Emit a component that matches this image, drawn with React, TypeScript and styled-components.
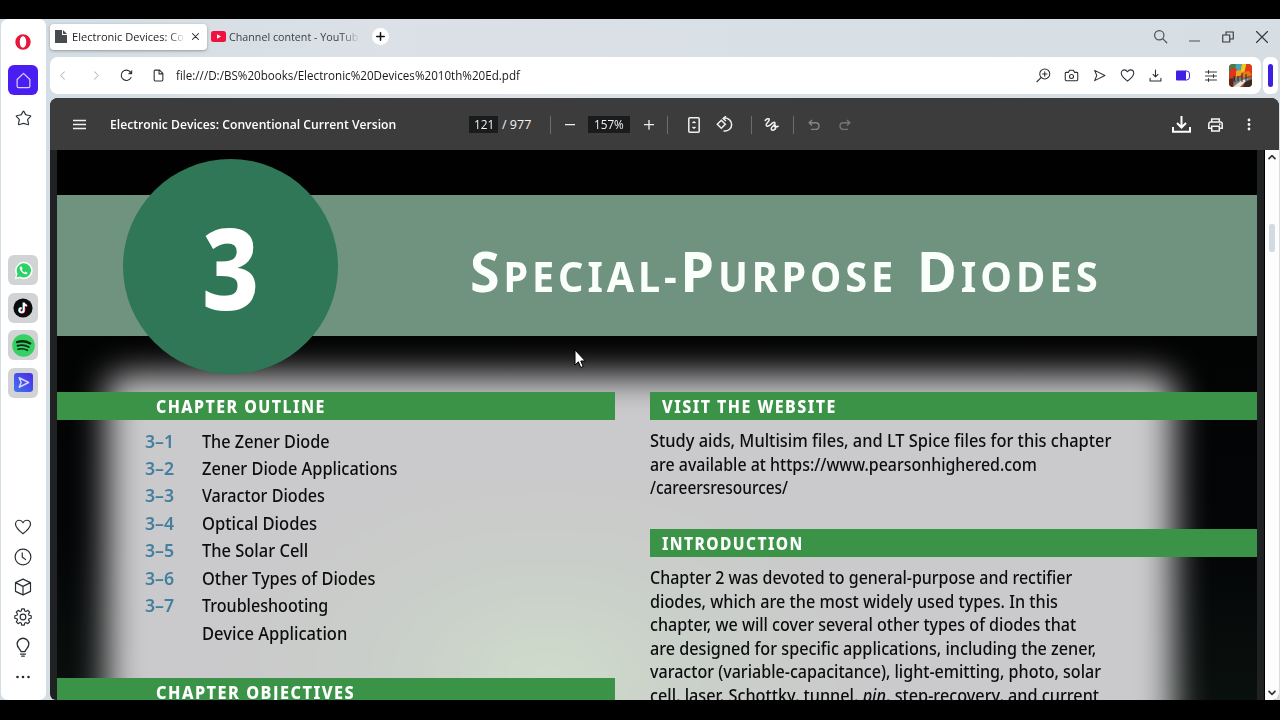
import React, { useLayoutEffect, useRef, useState } from "react";
import styled, { createGlobalStyle, css } from "styled-components";

const Global = createGlobalStyle`
  * { box-sizing: border-box; }
  body { margin: 0; background: #000; overflow: hidden; }
`;

const ui = `"Open Sans", "Noto Sans", sans-serif`;
const book = `"Noto Sans", "Open Sans", sans-serif`;

/* ---------- text set to a fixed measure ---------- */

const Measure = styled.span<{ $w: number }>`
  display: inline-block;
  flex: none;
  width: ${(p) => p.$w}px;
  white-space: nowrap;
`;

const Stretch = styled.span`
  display: inline-block;
  transform-origin: 0 50%;
`;

function Fit({ w, children }: { w: number; children: React.ReactNode }) {
  const ref = useRef<HTMLSpanElement>(null);
  const [scale, setScale] = useState(1);
  useLayoutEffect(() => {
    if (ref.current) setScale(w / ref.current.offsetWidth);
  }, [w]);
  return (
    <Measure $w={w}>
      <Stretch ref={ref} style={{ transform: `scaleX(${scale})` }}>
        {children}
      </Stretch>
    </Measure>
  );
}

/* ---------- window ---------- */

const Screen = styled.div`
  width: 1280px;
  height: 720px;
  padding: 19px 0 20px;
  background: #000;
  overflow: hidden;
  font-family: ${ui};
`;

const Window = styled.div`
  display: flex;
  height: 681px;
  padding-left: 1px;
  background: linear-gradient(90deg, #d3dde3 0%, #dbe1e6 30%, #d6dee3 100%);
`;

const Sidebar = styled.aside`
  display: flex;
  flex-direction: column;
  align-items: center;
  gap: 8px;
  flex: none;
  width: 45px;
  padding: 8px 1px 8px 0;
  background: #fff;
  border-radius: 7px;
`;

const SideSlot = styled.div<{ $tone?: string }>`
  display: flex;
  align-items: center;
  justify-content: center;
  flex: none;
  width: 30px;
  height: 30px;
  border-radius: 6px;
  background: ${(p) => p.$tone ?? "transparent"};
`;

const AppGroup = styled.div`
  display: flex;
  flex-direction: column;
  gap: 7.5px;
  margin-top: 114px;
`;

const ToolGroup = styled.div`
  margin-top: auto;
`;

const Main = styled.main`
  display: flex;
  flex-direction: column;
  flex: none;
  width: 1230px;
  margin-left: 4px;
`;

const TabStrip = styled.div`
  display: flex;
  align-items: center;
  height: 38px;
  padding-bottom: 3px;
`;

const Tab = styled.div<{ $active?: boolean }>`
  display: flex;
  align-items: center;
  flex: none;
  height: 26px;
  font-size: 11.5px;
  color: ${(p) => (p.$active ? "#1b1f24" : "#39414a")};
  ${(p) =>
    p.$active
      ? css`
          width: 157px;
          padding-left: 5px;
          background: #fff;
          border-radius: 4px;
          box-shadow: 0 1px 3px rgba(40, 50, 60, 0.4);
        `
      : css`
          width: 152px;
          padding-left: 4px;
        `}
`;

const TabLabel = styled.div<{ $w: number; $ml: number }>`
  width: ${(p) => p.$w}px;
  margin-left: ${(p) => p.$ml}px;
  overflow: hidden;
  white-space: nowrap;
  mask-image: linear-gradient(90deg, #000 86%, transparent 101%);
`;

const NewTab = styled.div`
  display: flex;
  align-items: center;
  justify-content: center;
  width: 17px;
  height: 17px;
  margin-left: 13px;
  border-radius: 50%;
  background: #fff;
`;

const Cell = styled.div<{ $w: number; $ml?: number }>`
  display: flex;
  align-items: center;
  justify-content: center;
  flex: none;
  width: ${(p) => p.$w}px;
  margin-left: ${(p) => p.$ml ?? 0}px;
`;

const Push = styled.div`
  margin-left: auto;
  display: flex;
  align-items: center;
`;

const AddressRow = styled.div`
  display: flex;
  gap: 2px;
  height: 37px;
`;

const AddressBar = styled.div`
  display: flex;
  align-items: center;
  width: 1211px;
  border-radius: 8px;
  background: #fff;
  font-size: 12.5px;
  color: #17191c;
`;

const SideToggle = styled.div`
  display: flex;
  align-items: center;
  justify-content: center;
  width: 15px;
  border-radius: 6px;
  background: #fff;
`;

const ToggleBar = styled.div`
  width: 5px;
  height: 23px;
  border-radius: 3px;
  background: #3d1fe0;
`;

/* ---------- document viewer ---------- */

const Viewer = styled.section`
  display: flex;
  flex-direction: column;
  width: 1229px;
  height: 602px;
  margin-top: 4px;
  border-radius: 8px 8px 6px 6px;
  background: #202122;
  overflow: hidden;
`;

const PdfBar = styled.div`
  display: flex;
  align-items: center;
  flex: none;
  height: 52px;
  padding-top: 1px;
  background: #3c3c3c;
  color: #f3f3f3;
  font-size: 12.5px;
`;

const DocTitle = styled.div`
  width: 359px;
  font-weight: 600;
  color: #fff;
`;

const NumberBox = styled.div<{ $w: number }>`
  display: flex;
  align-items: center;
  justify-content: center;
  flex: none;
  width: ${(p) => p.$w}px;
  height: 17px;
  background: #191b1c;
  font-weight: 500;
`;

const PageTotal = styled.div`
  width: 52px;
  padding-left: 4px;
  font-weight: 500;
`;

const Rule = styled.div<{ $ml?: number }>`
  width: 1px;
  height: 18px;
  margin-left: ${(p) => p.$ml ?? 0}px;
  background: #6d6d6d;
`;

const Body = styled.div`
  display: flex;
  flex: 1;
  padding-left: 7px;
`;

const Page = styled.article`
  position: relative;
  isolation: isolate;
  width: 1200px;
  height: 550px;
  overflow: hidden;
  background: linear-gradient(180deg, #010101 0%, #040506 70%, #0a100e 100%);
  font-family: ${book};
  color: #0d0d0f;

  &::before {
    content: "";
    position: absolute;
    z-index: -1;
    left: 50px;
    top: 225px;
    width: 1067px;
    height: 420px;
    border-radius: 16px;
    filter: blur(17px);
    background:
      radial-gradient(ellipse 330px 210px at 440px 300px, #cfdccb 0%, rgba(202, 214, 200, 0.5) 45%, rgba(201, 201, 202, 0) 100%),
      #cac9cb;
  }
`;

const Banner = styled.header`
  display: flex;
  align-items: center;
  height: 141px;
  margin-top: 45px;
  background: #6f937e;
`;

const ChapterDisc = styled.div`
  display: flex;
  align-items: center;
  justify-content: center;
  flex: none;
  width: 215px;
  height: 215px;
  margin: 2px 0 0 66px;
  border-radius: 50%;
  background: #307757;
  color: #fff;
  font-size: 113px;
  font-weight: 800;
  line-height: 1;
`;

const ChapterTitle = styled.h1`
  display: flex;
  gap: 20px;
  margin: 16px 0 0 132px;
  color: #fbfffb;
  font-size: 40.5px;
  font-weight: 700;
  line-height: 60px;
  letter-spacing: 4px;
`;

const Initial = styled.span`
  font-size: 55px;
  line-height: 60px;
`;

const Columns = styled.div`
  display: flex;
  gap: 35px;
  margin-top: 56px;
`;

const Column = styled.div<{ $w: number }>`
  flex: none;
  width: ${(p) => p.$w}px;
`;

const Heading = styled.h2<{ $pad: number; $mt?: number }>`
  height: 27.5px;
  margin: ${(p) => p.$mt ?? 0}px 0 0;
  padding-left: ${(p) => p.$pad}px;
  background: #3a9347;
  color: #fff;
  font-size: 17.5px;
  font-weight: 800;
  line-height: 28px;
  letter-spacing: 1.6px;
`;

const Outline = styled.ol`
  margin: 8px 0 0;
  padding: 0 0 0 87.5px;
  list-style: none;
`;

const OutlineRow = styled.li`
  display: flex;
  height: 27.45px;
  font-size: 18px;
  font-weight: 500;
  line-height: 27.45px;
`;

const Number = styled.span`
  width: 57px;
  color: #43809f;
  font-weight: 600;
`;

const Copy = styled.p`
  display: flex;
  flex-direction: column;
  margin: 9.5px 0 0;
  font-size: 18px;
  font-weight: 500;
  line-height: 23.5px;
`;

const ScrollTrack = styled.div`
  display: flex;
  flex-direction: column;
  align-items: center;
  width: 15px;
  margin-left: 7px;
  padding: 3px 0;
  border-left: 1px solid #000;
  background: #fdfdfd;
`;

const Thumb = styled.div`
  width: 6px;
  height: 28px;
  margin: 63px 0 auto;
  border-radius: 2px;
  background: #d3dbe2;
`;

const Pointer = styled.svg`
  position: absolute;
  left: 517px;
  top: 199px;
`;

/* ---------- icons ---------- */

type IconProps = {
  s: number;
  c?: string;
  sw?: number;
  children: React.ReactNode;
};

function Icon({ s, c = "#2b2f33", sw = 1.6, children }: IconProps) {
  return (
    <svg width={s} height={s} viewBox="0 0 24 24" fill="none" stroke={c} strokeWidth={sw} strokeLinecap="round" strokeLinejoin="round">
      {children}
    </svg>
  );
}

const heart = <path d="M12 21C7 17 2 13 2 8.3C2 5 4.400 3 7 3c2.200 0 4 1.200 5 3.200C13 4.200 14.800 3 17 3c2.600 0 5 2 5 5.300C22 13 17 17 12 21z" />;

const apps = [
  <svg key="w" width="19" height="19" viewBox="0 0 24 24">
    <path d="M1 23l1.700-6A11 11 0 1 1 7 21.500z" fill="#fff" />
    <path d="M3.200 20.800l1.300-4.700A9 9 0 1 1 8 19.700z" fill="#2bd366" />
    <path d="M8.400 6.800c-.8.500-1.300 1.500-1.100 2.700.6 3.300 3.700 6.500 7 7.200 1.300.2 2.500-.6 2.800-2l-2.500-1.400-1.300 1.200c-1.500-.6-2.800-1.900-3.500-3.400l1.100-1.300-1.200-2.900z" fill="#fff" />
  </svg>,
  <svg key="t" width="20" height="20" viewBox="0 0 24 24">
    <circle cx="12" cy="12" r="11.500" fill="#0b0b0d" />
    <path d="M12.400 5.500v9a2.600 2.600 0 1 1-2.600-2.600" fill="none" stroke="#25e5e0" strokeWidth="2.200" />
    <path d="M13.600 6v9a2.600 2.600 0 1 1-2.600-2.600M13.600 6c.3 2 1.700 3.300 3.700 3.500" fill="none" stroke="#f5315d" strokeWidth="2.200" />
    <path d="M13 5.600v9a2.600 2.600 0 1 1-2.600-2.600M13 5.600c.3 2 1.700 3.300 3.700 3.500" fill="none" stroke="#fff" strokeWidth="2.100" />
  </svg>,
  <svg key="s" width="23" height="23" viewBox="0 0 24 24">
    <circle cx="12" cy="12" r="11.800" fill="#35d162" />
    <g fill="none" stroke="#0c2a14" strokeLinecap="round">
      <path d="M5.200 8.400c4.700-1.400 9.800-.9 13.800 1.400" strokeWidth="2.400" />
      <path d="M5.800 12.300c4-1.200 8.300-.7 11.700 1.300" strokeWidth="2" />
      <path d="M6.300 15.900c3.300-.9 6.900-.5 9.800 1.100" strokeWidth="1.700" />
    </g>
  </svg>,
  <svg key="f" width="19" height="19" viewBox="0 0 24 24">
    <defs>
      <linearGradient id="flow" x1="0" y1="1" x2="1" y2="0">
        <stop offset="0" stopColor="#3f78ee" />
        <stop offset="1" stopColor="#4a2be6" />
      </linearGradient>
    </defs>
    <rect width="24" height="24" rx="4" fill="url(#flow)" />
    <path d="M6.500 6l12 6-12 6 2.500-6z" fill="none" stroke="#d9d4ff" strokeWidth="1.800" strokeLinejoin="round" />
  </svg>,
];

const gear =
  "M10.300 2h3.400l.6 2.900 1.700.7 2.500-1.600 2.400 2.400-1.600 2.500.7 1.700 2.900.6v1.700 1.700l-2.900.6-.7 1.700 1.600 2.500-2.400 2.400-2.500-1.600-1.700.7-.6 2.900h-3.400l-.6-2.900-1.700-.7-2.500 1.600-2.400-2.400 1.600-2.500-.7-1.700-2.900-.6v-3.400l2.900-.6.7-1.700-1.600-2.500 2.400-2.400 2.500 1.600 1.700-.7z";

const tools = [
  <Icon key="h" s={18}>{heart}</Icon>,
  <Icon key="c" s={18}>
    <circle cx="12" cy="12" r="10.500" />
    <path d="M11 6.500V12l4.500 3.500" />
  </Icon>,
  <Icon key="b" s={18}>
    <path d="M12 1.500l10 4.700v11.600l-10 4.700-10-4.700V6.200zM2 6.200l10 5 10-5M12 11.200v11.300" />
  </Icon>,
  <Icon key="g" s={18}>
    <path d={gear} transform="translate(0 -.9)" />
    <circle cx="12" cy="12" r="3.800" />
  </Icon>,
  <Icon key="l" s={20}>
    <path d="M9.500 17.500c0-2.500-4.500-4-4.500-9a7 7 0 0 1 14 0c0 5-4.500 6.500-4.500 9zM9 20.500h6M10.500 23h3" />
  </Icon>,
  <svg key="d" width="16" height="4" viewBox="0 0 16 4" fill="#26292c">
    <circle cx="2.500" cy="2" r="1.300" />
    <circle cx="8" cy="2" r="1.300" />
    <circle cx="13.500" cy="2" r="1.300" />
  </svg>,
];

/* ---------- content ---------- */

const outline: [string, string, number][] = [
  ["3–1", "The Zener Diode", 128],
  ["3–2", "Zener Diode Applications", 196],
  ["3–3", "Varactor Diodes", 123],
  ["3–4", "Optical Diodes", 115],
  ["3–5", "The Solar Cell", 106],
  ["3–6", "Other Types of Diodes", 173],
  ["3–7", "Troubleshooting", 126],
  ["", "Device Application", 145],
];

const website: [string, number][] = [
  ["Study aids, Multisim files, and LT Spice files for this chapter", 461],
  ["are available at https://www.pearsonhighered.com", 387],
  ["/careersresources/", 138],
];

const intro: [React.ReactNode, number][] = [
  ["Chapter 2 was devoted to general-purpose and rectifier", 422],
  ["diodes, which are the most widely used types. In this", 408],
  ["chapter, we will cover several other types of diodes that", 426],
  ["are designed for specific applications, including the zener,", 446],
  ["varactor (variable-capacitance), light-emitting, photo, solar", 451],
  [<>cell, laser, Schottky, tunnel, <i>pin</i>, step-recovery, and current</>, 449],
];

export default function App() {
  return (
    <Screen>
      <Global />
      <Window>
        <Sidebar>
          <SideSlot>
            <svg width="16" height="16" viewBox="0 0 16 16">
              <path fillRule="evenodd" fill="#e3173a" d="M8 .3a7.700 7.700 0 1 0 0 15.400A7.700 7.700 0 0 0 8 .3zM8 2.300c2 0 3.200 2.500 3.200 5.700S10 13.700 8 13.700 4.800 11.200 4.800 8 6 2.300 8 2.300z" />
            </svg>
          </SideSlot>
          <SideSlot $tone="#4a1df2">
            <Icon s={17} c="#d9d2ff" sw={1.7}>
              <path d="M3 10.500L12 2l9 8.500V20a2 2 0 0 1-2 2H5a2 2 0 0 1-2-2z" />
            </Icon>
          </SideSlot>
          <SideSlot>
            <Icon s={17} sw={1.7}>
              <path d="M12 1.500c1 0 2.300 4.600 3.300 5.300 1 .8 6.700.5 7 1.500.3 1-4 4-4.400 5.200-.4 1.200 2 6.400 1.100 7.100-.9.600-5.300-1.800-7-1.800s-6.100 2.400-7 1.800c-.9-.7 1.500-5.900 1.100-7.100C5.700 12.300 1.400 9.300 1.700 8.300c.3-1 6-.7 7-1.500 1-.7 2.300-5.300 3.300-5.300z" />
            </Icon>
          </SideSlot>
          <AppGroup>
            {apps.map((app, i) => (
              <SideSlot key={i} $tone="#d2d3d4">{app}</SideSlot>
            ))}
          </AppGroup>
          <ToolGroup>
            {tools.map((tool, i) => (
              <SideSlot key={i}>{tool}</SideSlot>
            ))}
          </ToolGroup>
        </Sidebar>

        <Main>
          <TabStrip>
            <Tab $active>
              <svg width="12" height="13" viewBox="0 0 12 13">
                <path d="M0 0h7v5h5v8H0z" fill="#474a4e" />
                <path d="M8 0l4 4H8z" fill="#474a4e" />
              </svg>
              <TabLabel $w={112} $ml={5}>
                <Fit w={124}>Electronic Devices: Conv</Fit>
              </TabLabel>
              <Cell $w={23}>
                <Icon s={9} c="#222" sw={2.8}><path d="M4 4l16 16M20 4L4 20" /></Icon>
              </Cell>
            </Tab>
            <Tab>
              <svg width="15" height="11" viewBox="0 0 15 11">
                <rect width="15" height="11" rx="2.500" fill="#f0123c" />
                <path d="M6 3.200v4.600l4-2.300z" fill="#fff" />
              </svg>
              <TabLabel $w={130} $ml={3}>
                <Fit w={135}>Channel content - YouTube</Fit>
              </TabLabel>
            </Tab>
            <NewTab>
              <Icon s={9} c="#111" sw={4}><path d="M12 2v20M2 12h20" /></Icon>
            </NewTab>
            <Push>
              <Cell $w={34}>
                <Icon s={15} c="#4b5257" sw={1.9}><circle cx="10" cy="10" r="7.500" /><path d="M15.500 15.500L22 22" /></Icon>
              </Cell>
              <Cell $w={34}>
                <Icon s={11} c="#4b5257" sw={2.2}><path d="M0 22h24" /></Icon>
              </Cell>
              <Cell $w={34}>
                <Icon s={12} c="#30353a" sw={2.2}><path d="M1.500 8h14v14h-14zM8 8V2h14.500v14H16" strokeLinejoin="miter" /></Icon>
              </Cell>
              <Cell $w={34}>
                <Icon s={12} c="#30353a" sw={2.2}><path d="M1 1l22 22M23 1L1 23" /></Icon>
              </Cell>
              <Cell $w={1} />
            </Push>
          </TabStrip>

          <AddressRow>
            <AddressBar>
              <Cell $w={24}><Icon s={11} c="#b9bcbf" sw={2.2}><path d="M16 4l-8 8 8 8" /></Icon></Cell>
              <Cell $w={45}><Icon s={11} c="#b9bcbf" sw={2.2}><path d="M8 4l8 8-8 8" /></Icon></Cell>
              <Cell $w={15}>
                <Icon s={13} c="#2b2f33" sw={2}><path d="M20.500 15.500A9.500 9.500 0 1 1 19.500 6" /><path d="M22 3v6h-6z" fill="#2b2f33" strokeWidth={1} /></Icon>
              </Cell>
              <Cell $w={48}>
                <Icon s={13} c="#2b2f33" sw={2}><path d="M4 4a2 2 0 0 1 2-2h8l6 6v12a2 2 0 0 1-2 2H6a2 2 0 0 1-2-2zM13 2v7h7" /></Icon>
              </Cell>
              <Cell $w={344} $ml={-6}>
                <Fit w={344}>file:///D:/BS%20books/Electronic%20Devices%2010th%20Ed.pdf</Fit>
              </Cell>
              <Push>
                <Cell $w={28}>
                  <Icon s={15} sw={1.7}><circle cx="14" cy="9.500" r="8" /><path d="M8 15.500l-6.500 6.500M14 6v7M10.500 9.500h7" /></Icon>
                </Cell>
                <Cell $w={28}>
                  <Icon s={15} sw={1.7}><path d="M3.500 7H7l2-3.500h6L17 7h3.500A1.500 1.500 0 0 1 22 8.500v10a2 2 0 0 1-2 2H4a2 2 0 0 1-2-2v-10A1.500 1.500 0 0 1 3.500 7z" /><circle cx="12" cy="13.500" r="3.200" /></Icon>
                </Cell>
                <Cell $w={28}>
                  <Icon s={13} sw={1.9}><path d="M3 2.500L22 12 3 21.500 7 12z" /></Icon>
                </Cell>
                <Cell $w={28}><Icon s={15} sw={1.7}>{heart}</Icon></Cell>
                <Cell $w={28}>
                  <Icon s={13} sw={2}><path d="M12 2v12M7.500 10l4.500 4.500L16.500 10M2 17v5h20v-5" /></Icon>
                </Cell>
                <Cell $w={28}>
                  <svg width="14" height="11" viewBox="0 0 14 11">
                    <path d="M9 1h1.500a3 3 0 0 1 3 3v3a3 3 0 0 1-3 3H9z" fill="#fff" stroke="#4424e8" />
                    <rect y=".5" width="10" height="10" rx="1" fill="#4120e6" />
                  </svg>
                </Cell>
                <Cell $w={28}>
                  <Icon s={12} sw={1.9}><path d="M1 4h22M1 12h22M1 20h22M7 1v6M17 9v6M7 17v6" /></Icon>
                </Cell>
                <Cell $w={30}>
                  <svg width="23" height="23" viewBox="0 0 23 23">
                    <defs>
                      <clipPath id="avatar"><rect width="23" height="23" rx="4" /></clipPath>
                      <filter id="paint"><feGaussianBlur stdDeviation=".6" /></filter>
                    </defs>
                    <g clipPath="url(#avatar)">
                      <rect width="23" height="23" fill="#b8441c" />
                      <g filter="url(#paint)">
                        <path d="M0 0h9l-3 6-6 3z" fill="#4a7a4a" />
                        <path d="M7 0h7l2 7-7 3-3-4z" fill="#49a3b0" />
                        <path d="M13 0h5l-3 9-4 2z" fill="#f2c51d" />
                        <path d="M17 0h6v10l-7 1z" fill="#dd3a12" />
                        <path d="M1 5l6-1 2 6-8 4z" fill="#e3331b" />
                        <path d="M7 7l5-1 1 5-6 2z" fill="#f0a51c" />
                        <path d="M13 8l7-1 3 4-10 3z" fill="#e8761a" />
                        <path d="M0 16l8-3 15 1v4l-12 2-11 3z" fill="#77797c" />
                        <path d="M4 23l9-7 6-1-4 4-4 4z" fill="#e9e4dc" />
                        <path d="M16 18l7-3v8h-9z" fill="#3b2a24" />
                        <path d="M0 15l5-1-1 9H0z" fill="#5f2018" />
                        <path d="M13 9v9M17 10v7M5 12l1 6M9 12v5" stroke="#2b2220" strokeWidth="1" />
                      </g>
                    </g>
                  </svg>
                </Cell>
                <Cell $w={6} />
              </Push>
            </AddressBar>
            <SideToggle><ToggleBar /></SideToggle>
          </AddressRow>

          <Viewer>
            <PdfBar>
              <Cell $w={59}>
                <svg width="13" height="11" viewBox="0 0 13 11" stroke="#f1f1f1" strokeWidth="1.400"><path d="M0 1.500h13M0 5.500h13M0 9.500h13" /></svg>
              </Cell>
              <Cell $w={1} />
              <DocTitle><Fit w={286}>Electronic Devices: Conventional Current Version</Fit></DocTitle>
              <NumberBox $w={29}><Fit w={20}>121</Fit></NumberBox>
              <PageTotal><Fit w={29}>/ 977</Fit></PageTotal>
              <Rule />
              <Cell $w={37}><Icon s={10} c="#eee" sw={3.2}><path d="M1 11h22" /></Icon></Cell>
              <NumberBox $w={42}><Fit w={30}>157%</Fit></NumberBox>
              <Cell $w={37}><Icon s={10} c="#eee" sw={3.2}><path d="M1 11h22M12 0v22" /></Icon></Cell>
              <Rule />
              <Cell $w={40} $ml={6}>
                <svg width="12" height="16" viewBox="0 0 12 16" fill="none" stroke="#f0f0f0" strokeWidth="1.500">
                  <rect x=".8" y=".8" width="10.400" height="14.400" rx="1" />
                  <path d="M4 6l2-2 2 2zM4 10l2 2 2-2z" fill="#f0f0f0" strokeWidth=".3" />
                </svg>
              </Cell>
              <Cell $w={20}>
                <svg width="17" height="17" viewBox="0 0 17 17" fill="none" stroke="#f0f0f0" strokeWidth="1.500">
                  <path d="M5.300 4.200l4 4-4 4-4-4z" />
                  <path d="M7.500 2.200c4.500-.7 8.200 2.200 8.200 6.300 0 4-3.700 7.200-8.200 6.400" />
                  <path d="M10 .2L7.200 2.500 10 5" />
                </svg>
              </Cell>
              <Rule $ml={17} />
              <Cell $w={39}>
                <svg width="15" height="15" viewBox="0 0 15 15" fill="none" stroke="#f0f0f0" strokeWidth="1.500" strokeLinecap="round" strokeLinejoin="round">
                  <path d="M1.200 3.500C2.500 1.800 5 .8 5.200 2.600 5.400 4.500 2 6 2.200 8c.2 2.200 3.300 1 4.800-.8C8.500 5.300 11 4.600 11 6.300c0 1.800-3.800 3.200-3.800 5.400 0 2.700 4.600 1.500 4.600-1.700 0-1.500-.9-2.400-1.500-2M10.300 8c-.6 1.800 1.700 3 3.900 1.200" />
                </svg>
              </Cell>
              <Rule $ml={2} />
              <Cell $w={40}>
                <svg width="12" height="12" viewBox="0 0 12 12" fill="none" stroke="#858585" strokeWidth="1.400"><path d="M4 1L1.200 3.800 4 6.600M1.200 3.800h6.500a3.300 3.300 0 0 1 0 6.600H3" /></svg>
              </Cell>
              <Cell $w={21}>
                <svg width="12" height="12" viewBox="0 0 12 12" fill="none" stroke="#757575" strokeWidth="1.400"><path d="M8 1l2.800 2.800L8 6.600M10.800 3.800H4.300a3.300 3.300 0 0 0 0 6.600H9" /></svg>
              </Cell>
              <Push>
                <Cell $w={33}>
                  <svg width="19" height="17" viewBox="0 0 19 17" fill="none" stroke="#fff" strokeWidth="2"><path d="M9.500 0v11M5 7l4.500 4.500L14 7M1 11v4.800h17V11" /></svg>
                </Cell>
                <Cell $w={35}>
                  <svg width="15" height="14" viewBox="0 0 15 14" fill="none" stroke="#f5f5f5" strokeWidth="1.500"><path d="M3.700 4V1h7.600v3M3.500 10.300H.8V6a2 2 0 0 1 2-2h9.400a2 2 0 0 1 2 2v4.300h-2.700M3.700 8.300h7.600v4.700H3.700z" /><path d="M11 6.200h1.500" /></svg>
                </Cell>
                <Cell $w={32}>
                  <svg width="4" height="13" viewBox="0 0 4 13" fill="#f5f5f5"><circle cx="2" cy="2" r="1.400" /><circle cx="2" cy="6.500" r="1.400" /><circle cx="2" cy="11" r="1.400" /></svg>
                </Cell>
                <Cell $w={14} />
              </Push>
            </PdfBar>

            <Body>
              <Page>
                <Banner>
                  <ChapterDisc><Fit w={57}>3</Fit></ChapterDisc>
                  <ChapterTitle>
                    <Fit w={427}><Initial>S</Initial>PECIAL-<Initial>P</Initial>URPOSE</Fit>
                    <Fit w={185}><Initial>D</Initial>IODES</Fit>
                  </ChapterTitle>
                </Banner>
                <Columns>
                  <Column $w={558}>
                    <Heading $pad={99}><Fit w={170}>CHAPTER OUTLINE</Fit></Heading>
                    <Outline>
                      {outline.map(([num, name, w]) => (
                        <OutlineRow key={name}>
                          <Number>{num && <Fit w={29.5}>{num}</Fit>}</Number>
                          <Fit w={w}>{name}</Fit>
                        </OutlineRow>
                      ))}
                    </Outline>
                    <Heading $pad={99} $mt={30.5}><Fit w={199}>CHAPTER OBJECTIVES</Fit></Heading>
                  </Column>
                  <Column $w={607}>
                    <Heading $pad={12}><Fit w={175}>VISIT THE WEBSITE</Fit></Heading>
                    <Copy>
                      {website.map(([line, w], i) => <Fit key={i} w={w}>{line}</Fit>)}
                    </Copy>
                    <Heading $pad={12} $mt={29.5}><Fit w={142}>INTRODUCTION</Fit></Heading>
                    <Copy>
                      {intro.map(([line, w], i) => <Fit key={i} w={w}>{line}</Fit>)}
                    </Copy>
                  </Column>
                </Columns>
                <Pointer width="12" height="20" viewBox="0 0 12 20">
                  <path d="M1 1v15l3.400-3.200L6.800 18.500l2.400-1-2.400-5.500h4.500z" fill="#fff" stroke="#000" strokeWidth="1" />
                </Pointer>
              </Page>
              <ScrollTrack>
                <Icon s={8} c="#333" sw={5}><path d="M3 17l9-9 9 9" /></Icon>
                <Thumb />
                <Icon s={8} c="#333" sw={5}><path d="M3 7l9 9 9-9" /></Icon>
              </ScrollTrack>
            </Body>
          </Viewer>
        </Main>
      </Window>
    </Screen>
  );
}
